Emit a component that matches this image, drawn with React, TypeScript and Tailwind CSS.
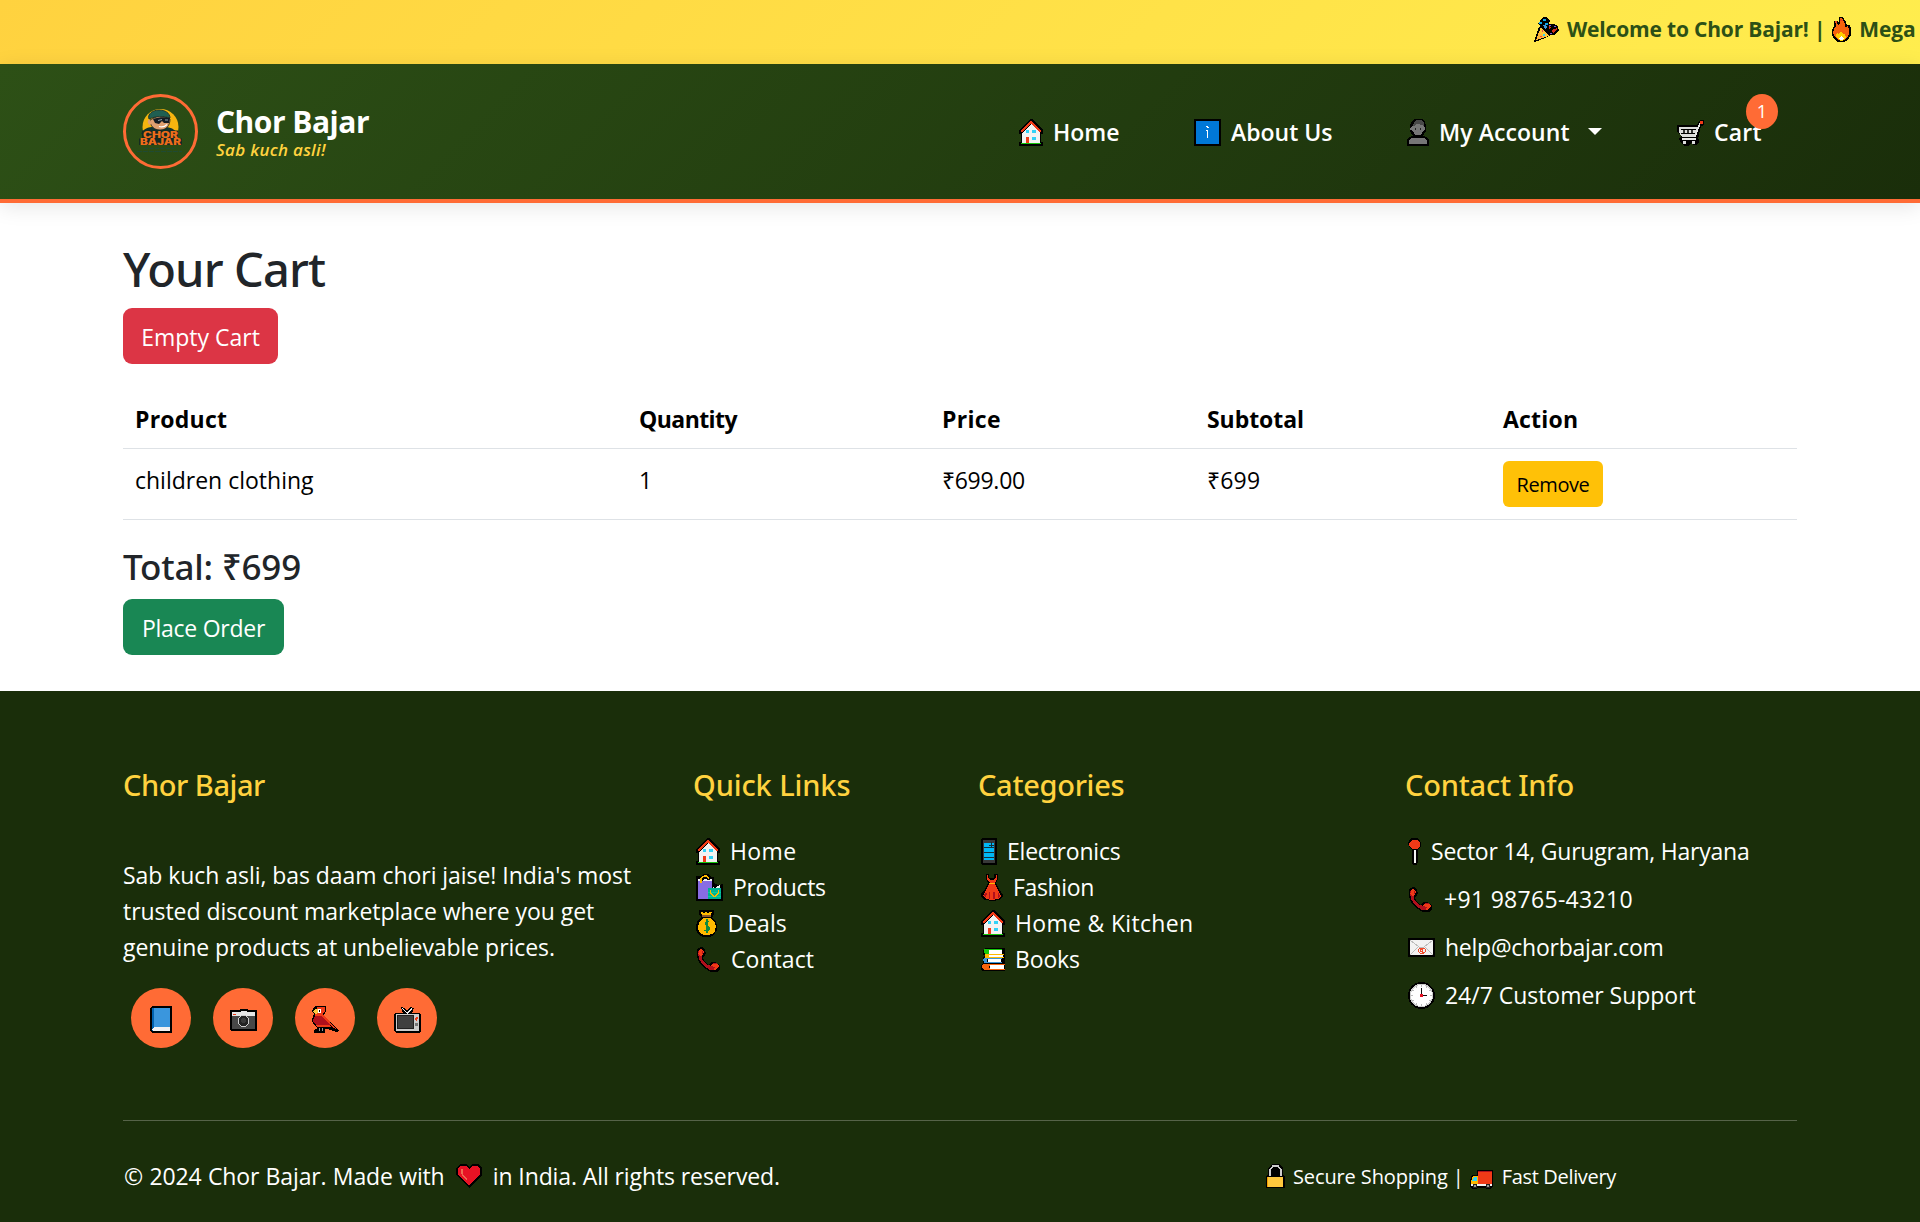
import type { ReactNode } from "react";

type IconProps = { w: number; h: number; className?: string; children: ReactNode };

function Icon({ w, h, className = "", children }: IconProps) {
  return (
    <svg
      width={w}
      height={h}
      viewBox={`0 0 ${w} ${h}`}
      shapeRendering="crispEdges"
      className={`shrink-0 ${className}`}
      aria-hidden="true"
    >
      {children}
    </svg>
  );
}

type P = { className?: string };

const House = ({ className }: P) => (
  <Icon w={24} h={27} className={className}>
    <path d="M11 0h2l11 11v4h-2v8h2v4H0v-4h2v-8H0v-4z" fill="#000" />
    <path d="M12 5l9 9v10H3V14z" fill="#f2f2f2" />
    <path d="M2 13L12 3l10 10" fill="none" stroke="#f03a17" strokeWidth="1.6" />
    <path d="M7 11h3v3H7zM13 11h4v3h-4zM13 18h4v3h-4z" fill="#31d2f7" />
    <path d="M7 18h3v6H7z" fill="#f03a17" />
    <path d="M2 24h20v1H2z" fill="#16c60c" />
  </Icon>
);

const Info = ({ className }: P) => (
  <Icon w={27} h={27} className={className}>
    <path d="M0 0h27v27H0z" fill="#000" />
    <path d="M2 2h23v23H2z" fill="#0078d7" />
    <path d="M12 7h2v1h1v1h-2V8h-1zM13 11h1v8h-1zM12 11h1v1h-1z" fill="#fff" />
  </Icon>
);

const Person = ({ className }: P) => (
  <Icon w={22} h={27} className={className}>
    <path d="M8 0h7l3 3 1 4v5l-3 5 4 1 2 3v6H0v-6l2-3 4-1-3-5V6l2-4z" fill="#000" />
    <path d="M7 4h8l2 4 1 1v2l-2 1-2 4H8l-2-4-3-1V9l2-1z" fill="#767676" />
    <path d="M6 7l1-4 3-2h4l3 2v5l-2-2-5-1-3 2z" fill="#484848" />
    <path d="M8 9h1v2H8zM13 9h1v2h-1z" fill="#222" />
    <path d="M5 19h12l3 2v4H2v-4z" fill="#767676" />
  </Icon>
);

const Trolley = ({ className }: P) => (
  <Icon w={27} h={26} className={className}>
    <path d="M23 0h4v5l-3 1-3 13h1v3l-2 3h-4l-2-2-3 3H7l-3-3-2-4 2-3L0 11V5h20z" fill="#000" />
    <path d="M2 7h19l-3 10H5L2 12z" fill="#dcdcdc" />
    <path d="M4 9h15v1H4zM4 13h14v1H4z" fill="#000" />
    <path d="M6 10h2v3H6zM10 10h2v3h-2zM14 10h2v3h-2z" fill="#333" />
    <path d="M5 19h14M23 3l-5 14" stroke="#e6e6e6" strokeWidth="1.500" />
    <path d="M6 21h3v3H6zM15 21h3v3h-3z" fill="#dcdcdc" />
    <path d="M23 1h3v3h-3z" fill="#f03a17" />
  </Icon>
);

const Party = ({ className }: P) => (
  <Icon w={25} h={25} className={className}>
    <path d="M0 25l5-15 1-1-2-3 2-2 3-4h3l4 4-1 3 4 0 4 1 2 5-1 2-4 3-3 0-6 3-10 4z" fill="#000" />
    <path d="M2 23l5-13 8 9z" fill="#ffb636" />
    <path d="M5 16l2-5 8 7-3 2z" fill="#ffc83d" />
    <path d="M5 5h3v2H5zM9 2h3v2H9zM11 6h3v2h-3z" fill="#0aa6ee" />
    <path d="M9 8l3-1 1 3-2 2z" fill="#3a96dd" />
    <path d="M15 9l2 1-2 3zM18 13l5-2 0 2-4 3z" fill="#d3321a" />
    <path d="M15 8h2v1h-2zM20 9h2v1h-2zM16 16h2v1h-2z" fill="#7c5ce6" />
    <path d="M8 13h1v2H8zM6 19h2v1H6z" fill="#e74856" />
    <path d="M9 17h2v2H9z" fill="#31d2f7" />
  </Icon>
);

const Fire = ({ className }: P) => (
  <Icon w={19} h={25} className={className}>
    <path d="M7 0h4l3 5 1 3 3 0 1 4v6l-3 5-4 2H6l-4-3-2-4v-5l2-4 0-5 3 0 2 1z" fill="#000" />
    <path d="M8 1h2l3 6 0 3 3-1 1 4v4l-2 4-3 2H7l-4-3-2-4 1-4 2-3V5l2 3 2-2z" fill="#f7630c" />
    <path d="M3 4h2v2H3zM8 2h2l1 2H8z" fill="#e8421a" />
    <path d="M6 22l-2-3 1-3 1 1 3-3 2 3 2 0 1 3-2 3-3 1z" fill="#ffd000" />
    <path d="M7 21l2-2 3 2-2 2H8z" fill="#fff" />
  </Icon>
);

const Bags = ({ className }: P) => (
  <Icon w={27} h={27} className={className}>
    <path d="M0 2h5l3-2h4l3 3h3v6l4 2 5-1v17H0z" fill="#000" />
    <path d="M2 5l2 1 2 1 3-2 3 2 4-1v19H2z" fill="#886ce4" />
    <path d="M2 5h2l2 2 3-2 3 1 4-1v2H2z" fill="#f2f2f2" />
    <path d="M5 9V4l3-2h3l2 3" fill="none" stroke="#ffb900" strokeWidth="1.200" />
    <path d="M12 14h13v11H12z" fill="#00b294" />
    <path d="M12 18h13v1H12zM12 22h13v1H12z" fill="#0ccc9c" />
    <path d="M17 13l2 1 3-2 2-1v3h-7z" fill="#f2f2f2" />
    <path d="M14.500 16v3l3 3h2l3-3v-3" fill="none" stroke="#ffb900" />
  </Icon>
);

const Money = ({ className }: P) => (
  <Icon w={22} h={27} className={className}>
    <path d="M3 0h15v4l-2 4 4 4 1 4v4l-3 5-4 2H7l-4-2-3-5v-5l2-5 3-3-2-3z" fill="#000" />
    <path d="M5 2h2v1h2V2h2v1h2V2h3l-1 3H6z" fill="#ffb900" />
    <path d="M6 5h9v2H6z" fill="#8e562e" />
    <path d="M7 8h8l4 5 1 3-1 5-3 3-4 1H8l-4-2-2-4v-3l2-5z" fill="#ffb900" />
    <path d="M13 12l-2-1-2 2 1 2 3 2v3l-2 1-3-1M11 9v14" fill="none" stroke="#10893e" strokeWidth="1.200" />
  </Icon>
);

const Phone = ({ className }: P) => (
  <Icon w={25} h={25} className={className}>
    <path d="M2 1l3-1 3 1 2 5-1 3-2 1 1 4 5 4 2-3h4l5 3v4l-3 3h-6l-7-4-5-6-2-6V4z" fill="#000" />
    <path d="M3 3l-1 3 1 6 4 6 7 5h4l1-3-4-1-5-2-4-5V9L5 7z" fill="#b1101c" />
    <path d="M4 2h2l2 3-1 3-3 1-2-2zM16 17l6 0 1 2-3 4h-2l1-3-4-1z" fill="#f03a17" />
    <path d="M6 4h1v3H6zM17 16h4v1h-4z" fill="#b1101c" />
  </Icon>
);

const Mobile = ({ className }: P) => (
  <Icon w={16} h={27} className={className}>
    <path d="M1 0h14l1 1v25l-1 1H1l-1-1V1z" fill="#000" />
    <path d="M2 2h12v23H2z" fill="#383838" />
    <path d="M3 5h10v17H3z" fill="#00b7f5" />
    <path d="M3 9h10v1H3zM3 14h10v1H3zM3 19h10v1H3zM10 4h1v5h-1zM8 7h5v1H8z" fill="#12303a" />
  </Icon>
);

const Dress = ({ className }: P) => (
  <Icon w={22} h={27} className={className}>
    <path d="M5 0h3v4h5V0h4v5l-2 4 3 6 4 6v2l-4 3-7 1-7-1-4-3v-3l4-5 3-6-2-4z" fill="#000" />
    <path d="M7 1v3l3 2h2l3-2V1h1v4l-2 4H9L6 5V1z" fill="#f03a17" />
    <path d="M8 10h6l3 6 3 6-3 3-6 1-6-1-3-3 3-6z" fill="#f03a17" />
    <path d="M8 9h6v1H8z" fill="#ffb900" />
    <path d="M4 19l2 0-1 5-2-2zM8 18h1v7H8zM12 18h2v7h-2zM17 18l2 4-2 2z" fill="#b1101c" />
  </Icon>
);

const Books = ({ className }: P) => (
  <Icon w={24} h={23} className={className}>
    <path d="M4 0h20v23H1l-1-2v-4l2-2V9l2-2H2V2z" fill="#000" />
    <path d="M3 1h18v1H9v3h12v1H4L3 5z" fill="#16c60c" />
    <path d="M8 2h13v4H8zM8 7h14v2H8zM7 11h13v3H7zM9 17h14v4H9z" fill="#fff" />
    <path d="M4 7h4v2h15v1H4zM4 6h19v1H4z" fill="#ffb900" />
    <path d="M2 11h4v3h15v1H3zM3 10h18v1H3z" fill="#3a96dd" />
    <path d="M2 16h22v1H9l-1 2 1 2h15v1H3l-2-2v-3z" fill="#f7630c" />
  </Icon>
);

const Pin = ({ className }: P) => (
  <Icon w={13} h={27} className={className}>
    <path d="M4 0h5l3 2 1 3v3l-3 4v12l-1 3H5l-1-3V12L1 9 0 5l2-4z" fill="#000" />
    <path d="M4 2h5l3 3v3l-3 3H4L1 8V5z" fill="#f03a17" />
    <path d="M6 12h2v13H6z" fill="#f2f2f2" />
  </Icon>
);

const Mail = ({ className }: P) => (
  <Icon w={27} h={19} className={className}>
    <path d="M0 0h27v19H0z" fill="#000" />
    <path d="M2 2h23v15H2z" fill="#f2f2f2" />
    <path d="M2 2l9 7 3 1 2-1 9-7M2 17l8-8M25 17l-8-8" fill="none" stroke="#bdbdbd" />
    <path d="M16 15h-4l-2-2v-1l2-2h3l2 1v3h-3v-3h-1l-1 2h2" fill="none" stroke="#f03a17" strokeWidth="0.900" />
  </Icon>
);

const Clock = ({ className }: P) => (
  <Icon w={27} h={27} className={className}>
    <circle cx="13.500" cy="13.500" r="13.500" fill="#000" />
    <circle cx="13.500" cy="13.500" r="11.700" fill="#cccccc" />
    <circle cx="13.500" cy="13.500" r="10.600" fill="#fff" />
    <path
      d="M13 3h1v2h-1zM13 22h1v2h-1zM3 13h2v1H3zM22 13h2v1h-2zM8 4h1v2H8zM18 4h1v2h-1zM4 8h2v1H4zM21 8h2v1h-2zM4 18h2v1H4zM21 18h2v1h-2zM8 21h1v2H8zM18 21h1v2h-1z"
      fill="#bbb"
    />
    <path d="M13 6h1v7h-1zM14 13h5v1h-5z" fill="#111" />
    <path d="M12 12h3v3h-3z" fill="#e81224" />
  </Icon>
);

const BlueBook = () => (
  <Icon w={22} h={27}>
    <path d="M2 0h20v27H2l-2-2V2z" fill="#000" />
    <path d="M2 2h18v23H2z" fill="#3a96dd" />
    <path d="M2 2h2v23H2z" fill="#0063b1" />
    <path d="M4 21h16v4H3l-1-2z" fill="#f2f2f2" />
  </Icon>
);

const Camera = () => (
  <Icon w={27} h={22}>
    <path d="M0 1h9l2-1h6l2 1h8v20l-1 1H1l-1-1z" fill="#000" />
    <path d="M2 3h8l2-1h4l2 1h7v4H2z" fill="#e6e6e6" />
    <path d="M2 7h23v13H2z" fill="#484848" />
    <path d="M3 5h3v1H3z" fill="#f03a17" />
    <circle cx="13.500" cy="12" r="6" fill="#ccc" />
    <circle cx="13.500" cy="12" r="5" fill="#222" />
    <circle cx="13.500" cy="11.500" r="2.500" fill="#3a3a3a" />
  </Icon>
);

const Parrot = () => (
  <Icon w={27} h={27}>
    <path d="M4 0h10v5l-2 4 15 16-3 1-8-3h-3v4H2v-3l4-2-5-4-1-5 2-5-2-2 1-4z" fill="#000" />
    <path d="M5 1h8v4l-3 5-7 0z" fill="#f03a17" />
    <path d="M1 6l2-3h3v4L3 8z" fill="#ffc83d" />
    <path d="M6 3h3v4H6z" fill="#fff" />
    <path d="M7 4h1v2H7z" fill="#000" />
    <path d="M3 10h7l9 9H4l-2-2-1-3z" fill="#b1101c" />
    <path d="M10 9h2l12 14-3-1-10-10zM3 19h15l1 2H6z" fill="#f03a17" />
    <path d="M8 22l-1 3M11 22l-1 3" fill="none" stroke="#999" />
  </Icon>
);

const Tv = () => (
  <Icon w={27} h={26}>
    <path d="M7 0l4 1 2 3 3-4 4 1-2 5h8l1 2v16l-2 2H2l-2-2V7l2-1h7z" fill="#000" />
    <path d="M8 1l5 5h1l4-5" fill="none" stroke="#f2f2f2" strokeWidth="1.400" />
    <path d="M2 7h23v17H2z" fill="#ccc" />
    <path d="M3 8h17v14H3z" fill="#222" />
    <path d="M4 9h15v12H4z" fill="#404040" />
    <path d="M21 11l2-2 1 2-2 3zM22 12h1v2h-1z" fill="#f03a17" />
    <path d="M21 16h3v3h-3z" fill="#767676" />
  </Icon>
);

const Heart = () => (
  <Icon w={26} h={24}>
    <path d="M4 0h6l3 3 3-3h6l4 4v7L13 24 0 11V4z" fill="#000" />
    <path d="M4 2h6l3 3 3-3h6l2 3v5L13 22 2 10V5z" fill="#e81224" />
    <path d="M5 5h2v5l4 5-1 1-4-5-1-3z" fill="#ef6950" />
  </Icon>
);

const Lock = () => (
  <Icon w={19} h={24}>
    <path d="M6 0h7l4 4v7l2 1v12H0V12l2-1V4z" fill="#000" />
    <path d="M4 12V6l3-4h5l3 4v6" fill="none" stroke="#ccc" strokeWidth="1.500" />
    <path d="M2 13h15v10H2z" fill="#ffc83d" />
    <path d="M1 13h1v10H1z" fill="#f2a100" />
  </Icon>
);

const Truck = () => (
  <Icon w={23} h={19}>
    <path d="M7 0h16v17l-3 2h-3l-2-1H8l-2 1H3l-3-2v-7l2-5h5z" fill="#000" />
    <path d="M8 1h14v13H8z" fill="#f03a17" />
    <path d="M8 1h14v1H8z" fill="#b1101c" />
    <path d="M3 6h5v9H1v-4z" fill="#ffb900" />
    <path d="M4 7h3v4H2z" fill="#31d2f7" />
    <path d="M1 14h21v2H1z" fill="#f2f2f2" />
    <path d="M3 14h4v4H3zM16 14h4v4h-4z" fill="#222" />
    <path d="M4 15h2v2H4zM17 15h2v2h-2z" fill="#999" />
  </Icon>
);

const Logo = () => (
  <div className="size-[75px] shrink-0 rounded-full border-[3px] border-[#ff6b35]">
    <svg width="69" height="69" viewBox="3 3 69 69" aria-label="Chor Bajar logo">
      <circle cx="37.500" cy="33" r="18" fill="#f5b50f" />
      <path d="M19 38c3-4 7-5 11-5h14c5 1 9 3 10 7H18z" fill="#12352f" />
      <path d="M27 26c0 6 4 10 10 10 6 0 10-4 10-11l-10-4z" fill="#e0a070" stroke="#1a2420" strokeWidth="0.800" />
      <path d="M27 26c-3-1-3 4 0 5l2-2z" fill="#e0a070" />
      <path d="M26 25c-2-5 4-9 10-9 6 0 11 3 11 8-7-2-14-2-21 1z" fill="#1f5f52" stroke="#12302c" strokeWidth="0.900" />
      <path d="M30 25c6-2 12-2 17-1l-1 5-5 0-2-2-3 3-4-1z" fill="#151c22" />
      <path d="M35 26.500l4-1M42 26l3 0" stroke="#9db3bb" strokeWidth="0.900" />
      <path d="M36 32.500c3 1 6 0 8-2" fill="none" stroke="#fff" strokeWidth="1.200" />
      <path d="M19 36.500h36v8h4v6.500H16v-6.500h3z" fill="#142a22" />
      <text x="20" y="43.500" textLength="35" lengthAdjust="spacingAndGlyphs" fontFamily="Inter, sans-serif" fontSize="8.600" fontWeight="900" fill="#ee6d1a">CHOR</text>
      <text x="17" y="50.800" textLength="41" lengthAdjust="spacingAndGlyphs" fontFamily="Inter, sans-serif" fontSize="8.300" fontWeight="900" fill="#ee6d1a">BAJAR</text>
      <path d="M21 54.500h30" stroke="#1f4a33" strokeDasharray="4 1.500" />
      <path d="M14 57.500h45" stroke="#1f4a33" strokeDasharray="5 1" />
    </svg>
  </div>
);

const heading = "h-9 font-['Noto_Sans',sans-serif] text-[29px] leading-9 font-medium text-[#ffd23f] whitespace-nowrap";

type Row = { icon: ReactNode; text: string; cls: string };

const quickLinks: Row[] = [
  { icon: <House />, text: "Home", cls: "ml-[10px] tracking-[0.4px]" },
  { icon: <Bags />, text: "Products", cls: "ml-[10px] tracking-[-0.35px]" },
  { icon: <Money />, text: "Deals", cls: "ml-[9.5px]" },
  { icon: <Phone />, text: "Contact", cls: "ml-[10px] tracking-[0.05px]" },
];

const categories: Row[] = [
  { icon: <Mobile />, text: "Electronics", cls: "ml-[10px] tracking-[-0.22px]" },
  { icon: <Dress />, text: "Fashion", cls: "ml-[10px] tracking-[-0.35px]" },
  { icon: <House />, text: "Home & Kitchen", cls: "ml-[10px] tracking-[0.32px]" },
  { icon: <Books />, text: "Books", cls: "ml-[10px] tracking-[-0.15px]" },
];

const contacts: Row[] = [
  { icon: <Pin />, text: "Sector 14, Gurugram, Haryana", cls: "ml-[10px] tracking-[-0.22px]" },
  { icon: <Phone />, text: "+91 98765-43210", cls: "ml-[11px] tracking-[0.3px]" },
  { icon: <Mail />, text: "help@chorbajar.com", cls: "ml-[10px] tracking-[-0.24px]" },
  { icon: <Clock />, text: "24/7 Customer Support", cls: "ml-[10px] tracking-[-0.03px]" },
];

function LinkList({ title, titleClass, rows, listClass }: { title: string; titleClass: string; rows: Row[]; listClass: string }) {
  return (
    <div>
      <h5 className={`${heading} ${titleClass}`}>{title}</h5>
      <ul className={`mt-[30px] flex flex-col pl-[3px] ${listClass}`}>
        {rows.map((r) => (
          <li key={r.text} className="flex h-9 items-center whitespace-nowrap">
            {r.icon}
            <span className={r.cls}>{r.text}</span>
          </li>
        ))}
      </ul>
    </div>
  );
}

export default function App() {
  return (
    <div className="h-[1222px] w-[1920px] overflow-hidden bg-white font-['Open_Sans',sans-serif] text-[23px] leading-9 text-[#212529]">
      <div className="flex h-16 items-start overflow-hidden bg-linear-135 from-[#ffd23f] to-[#ffed4e] pl-[1534px] text-[21px] font-bold whitespace-nowrap text-[#2d5016]">
        <Party className="mt-[17px]" />
        <span className="mt-[11px] ml-2 tracking-[-0.18px]">Welcome to Chor Bajar! |</span>
        <Fire className="mt-[17px] ml-[7px]" />
        <span className="mt-[11px] ml-2 tracking-[-0.12px]">Mega Sale Live Now!</span>
      </div>

      <header className="relative flex h-[139px] items-start border-b-4 border-[#ff6b35] bg-linear-135 from-[#2d5016] to-[#1a2e0a] px-[123px] pt-[30px] text-white shadow-[0_4px_20px_rgba(0,0,0,0.1)]">
        <Logo />
        <div className="ml-[18px] flex flex-col whitespace-nowrap">
          <span className="mt-[10px] text-[30px] leading-9 font-bold tracking-[-0.5px]">Chor Bajar</span>
          <span className="mt-[-1px] text-[17px] leading-[22px] font-semibold tracking-[0.28px] text-[#ffd23f] italic">Sab kuch asli!</span>
        </div>
        <nav className="mt-5 ml-auto flex w-[778px] font-semibold whitespace-nowrap">
          <a className="flex w-[175px] items-start">
            <House className="mt-[5px]" />
            <span className="ml-[10px]">Home</span>
          </a>
          <a className="flex w-[213px] items-start">
            <Info className="mt-[5px]" />
            <span className="ml-[10px]">About Us</span>
          </a>
          <a className="flex w-[270px] items-start">
            <Person className="mt-[5px]" />
            <span className="ml-[10px] tracking-[0.08px]">My Account</span>
            <svg width="14" height="7" viewBox="0 0 14 7" className="mt-[14px] ml-[18px]" aria-hidden="true">
              <path d="M0 0h14L7 7z" fill="#fff" />
            </svg>
          </a>
          <a className="relative flex items-start">
            <Trolley className="mt-[6px]" />
            <span className="ml-[10px] tracking-[0.2px]">Cart</span>
            <span className="absolute top-[-20px] left-[69px] h-[35px] w-8 rounded-[50%] bg-[#ff6b35] text-center text-[18px] leading-[35px] font-medium">1</span>
          </a>
        </nav>
      </header>

      <main className="h-[488px] px-[123px] pt-[37px]">
        <h1 className="h-[58px] font-['Noto_Sans',sans-serif] text-[47px] leading-[58px] font-medium tracking-[-0.87px]">Your Cart</h1>
        <button className="mt-[10px] block h-14 w-[155px] rounded-[9px] bg-[#dc3545] pt-[2px] text-white">Empty Cart</button>

        <table className="mt-6 w-[1674px] table-fixed border-separate border-spacing-0 text-left text-black">
          <colgroup>
            <col className="w-[504px]" />
            <col className="w-[303px]" />
            <col className="w-[265px]" />
            <col className="w-[296px]" />
            <col />
          </colgroup>
          <thead>
            <tr className="h-[61px] align-top">
              <th className="border-b border-[#dee2e6] px-3 pt-[13px] font-bold tracking-[0.23px]">Product</th>
              <th className="border-b border-[#dee2e6] px-3 pt-[13px] font-bold tracking-[-0.56px]">Quantity</th>
              <th className="border-b border-[#dee2e6] px-3 pt-[13px] font-bold tracking-[0.3px]">Price</th>
              <th className="border-b border-[#dee2e6] px-3 pt-[13px] font-bold tracking-[-0.06px]">Subtotal</th>
              <th className="border-b border-[#dee2e6] px-3 pt-[13px] font-bold tracking-[0.21px]">Action</th>
            </tr>
          </thead>
          <tbody>
            <tr className="h-[71px] align-top">
              <td className="border-b border-[#dee2e6] px-3 pt-[13px]">children clothing</td>
              <td className="border-b border-[#dee2e6] px-3 pt-[13px]">1</td>
              <td className="border-b border-[#dee2e6] px-3 pt-[13px] tracking-[-0.27px]">₹699.00</td>
              <td className="border-b border-[#dee2e6] px-3 pt-[13px] tracking-[0.2px]">₹699</td>
              <td className="border-b border-[#dee2e6] px-3 pt-3">
                <button className="block h-[46px] w-[100px] rounded-md bg-[#ffc107] pt-[2px] text-[20px] tracking-[-0.42px]">Remove</button>
              </td>
            </tr>
          </tbody>
        </table>

        <h3 className="mt-[26px] h-[42px] font-['Noto_Sans',sans-serif] text-[35px] leading-[42px] font-medium tracking-[-0.2px]">Total: ₹699</h3>
        <button className="mt-[11px] block h-14 w-[161px] rounded-[9px] bg-[#198754] pt-[2px] tracking-[-0.26px] text-white">Place Order</button>
      </main>

      <footer className="h-[531px] bg-[#1a2e0a] px-[123px] pt-[76px] text-white">
        <div className="grid h-[353px] grid-cols-[570px_285px_427px_1fr]">
          <div>
            <h5 className={`${heading} tracking-[-0.45px]`}>Chor Bajar</h5>
            <p className="mt-[54px] tracking-[-0.05px] whitespace-nowrap">
              Sab kuch asli, bas daam chori jaise! India's most
              <br />
              trusted discount marketplace where you get
              <br />
              genuine products at unbelievable prices.
            </p>
            <div className="mt-[23px] ml-2 flex gap-[22px]">
              {[<BlueBook />, <Camera />, <Parrot />, <Tv />].map((icon, i) => (
                <a key={i} className="flex size-[60px] items-center justify-center rounded-full bg-[#ff6b35] pt-[3px]">
                  {icon}
                </a>
              ))}
            </div>
          </div>
          <LinkList title="Quick Links" titleClass="tracking-[-0.1px]" rows={quickLinks} listClass="" />
          <LinkList title="Categories" titleClass="tracking-[-0.3px]" rows={categories} listClass="" />
          <LinkList title="Contact Info" titleClass="tracking-[-0.2px]" rows={contacts} listClass="gap-3" />
        </div>
        <div className="flex border-t border-[#566349] pt-[37px] whitespace-nowrap">
          <div className="flex h-9 w-[1140px] items-center">
            <span className="pl-px tracking-[-0.14px] [word-spacing:0.6px]">© 2024 Chor Bajar. Made with</span>
            <span className="mr-[11px] ml-auto">
              <Heart />
            </span>
            <span className="mr-[483px] tracking-[-0.1px]">in India. All rights reserved.</span>
          </div>
          <div className="flex h-9 items-center pl-[3px] text-[20px]">
            <Lock />
            <span className="mt-[2px] ml-[8px] tracking-[-0.12px]">Secure Shopping |</span>
            <span className="mt-[7px] ml-[6px]">
              <Truck />
            </span>
            <span className="mt-[2px] ml-[9px] tracking-[-0.33px]">Fast Delivery</span>
          </div>
        </div>
      </footer>
    </div>
  );
}
